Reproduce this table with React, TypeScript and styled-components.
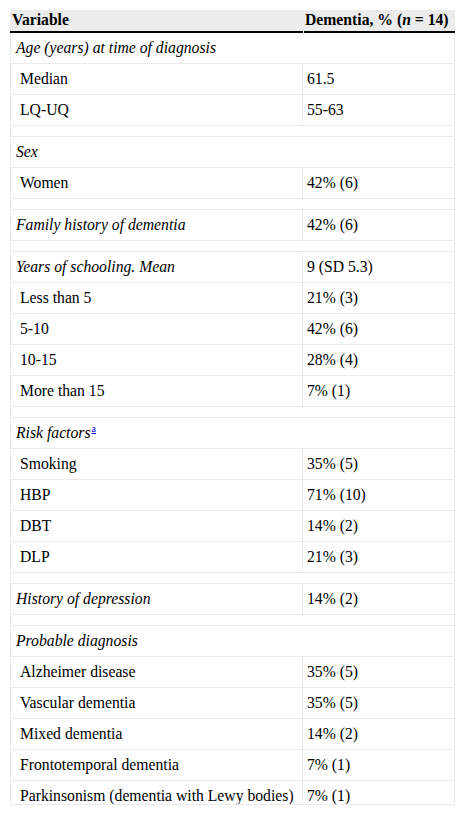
import React from "react";
import styled, { createGlobalStyle } from "styled-components";

const Global = createGlobalStyle`
  html, body { margin: 0; padding: 0; background: #fff; }
  body { font-family: "Liberation Serif", "Times New Roman", serif; color: #000; }
`;

const Frame = styled.div`
  margin: 10px;
  width: 445px;
  height: 795px;
  overflow: hidden;
  display: flex;
  flex-direction: column;
  font-size: 15.7px;
`;

const HeaderRow = styled.div`
  display: grid;
  grid-template-columns: 293px 1fr;
  column-gap: 1px;
  background: #ececec;
  flex: none;
`;

const HeadCell = styled.div<{ $pad: number }>`
  height: 21px;
  line-height: 20px;
  padding-left: ${(p) => p.$pad}px;
  border-bottom: 2px solid #000;
  font-weight: bold;
  white-space: nowrap;
`;

const Body = styled.div`
  flex: 1;
  min-height: 0;
  overflow: hidden;
  border: 1px solid #ebebeb;
  border-top: none;
`;

const Row = styled.div<{ $spacer?: boolean }>`
  display: grid;
  grid-template-columns: 292px 1fr;
  height: ${(p) => (p.$spacer ? 10 : 30)}px;
  border-bottom: 1px solid #ebebeb;
`;

const LabelCell = styled.div<{ $span?: boolean; $indent?: boolean; $italic?: boolean }>`
  grid-column: ${(p) => (p.$span ? "1 / span 2" : "1")};
  display: flex;
  align-items: center;
  padding-left: ${(p) => (p.$indent ? 9 : 5)}px;
  font-style: ${(p) => (p.$italic ? "italic" : "normal")};
  border-right: ${(p) => (p.$span ? "none" : "1px solid #ebebeb")};
  white-space: nowrap;
`;

const ValueCell = styled.div`
  display: flex;
  align-items: center;
  padding-left: 4px;
  white-space: nowrap;
`;

const Note = styled.a`
  font-style: normal;
  font-size: 10px;
  color: #00e;
  text-decoration: underline;
  position: relative;
  top: -6px;
  margin-left: 1px;
`;

type Item =
  | { kind: "spacer" }
  | { kind: "cat"; label: string; value?: string; note?: boolean }
  | { kind: "item"; label: string; value: string };

const rows: Item[] = [
  { kind: "cat", label: "Age (years) at time of diagnosis" },
  { kind: "item", label: "Median", value: "61.5" },
  { kind: "item", label: "LQ-UQ", value: "55-63" },
  { kind: "spacer" },
  { kind: "cat", label: "Sex" },
  { kind: "item", label: "Women", value: "42% (6)" },
  { kind: "spacer" },
  { kind: "cat", label: "Family history of dementia", value: "42% (6)" },
  { kind: "spacer" },
  { kind: "cat", label: "Years of schooling. Mean", value: "9 (SD 5.3)" },
  { kind: "item", label: "Less than 5", value: "21% (3)" },
  { kind: "item", label: "5-10", value: "42% (6)" },
  { kind: "item", label: "10-15", value: "28% (4)" },
  { kind: "item", label: "More than 15", value: "7% (1)" },
  { kind: "spacer" },
  { kind: "cat", label: "Risk factors", note: true },
  { kind: "item", label: "Smoking", value: "35% (5)" },
  { kind: "item", label: "HBP", value: "71% (10)" },
  { kind: "item", label: "DBT", value: "14% (2)" },
  { kind: "item", label: "DLP", value: "21% (3)" },
  { kind: "spacer" },
  { kind: "cat", label: "History of depression", value: "14% (2)" },
  { kind: "spacer" },
  { kind: "cat", label: "Probable diagnosis" },
  { kind: "item", label: "Alzheimer disease", value: "35% (5)" },
  { kind: "item", label: "Vascular dementia", value: "35% (5)" },
  { kind: "item", label: "Mixed dementia", value: "14% (2)" },
  { kind: "item", label: "Frontotemporal dementia", value: "7% (1)" },
  { kind: "item", label: "Parkinsonism (dementia with Lewy bodies)", value: "7% (1)" },
];

export default function App() {
  return (
    <>
      <Global />
      <Frame>
        <HeaderRow>
          <HeadCell $pad={2}>Variable</HeadCell>
          <HeadCell $pad={1}>
            Dementia, % (<i>n</i> = 14)
          </HeadCell>
        </HeaderRow>
        <Body>
          {rows.map((r, i) => {
            if (r.kind === "spacer") return <Row key={i} $spacer />;
            if (r.kind === "cat") {
              const span = r.value === undefined;
              return (
                <Row key={i}>
                  <LabelCell $span={span} $italic>
                    <span>
                      {r.label}
                      {r.note && <Note href="#">a</Note>}
                    </span>
                  </LabelCell>
                  {!span && <ValueCell>{r.value}</ValueCell>}
                </Row>
              );
            }
            return (
              <Row key={i}>
                <LabelCell $indent>{r.label}</LabelCell>
                <ValueCell>{r.value}</ValueCell>
              </Row>
            );
          })}
        </Body>
      </Frame>
    </>
  );
}
